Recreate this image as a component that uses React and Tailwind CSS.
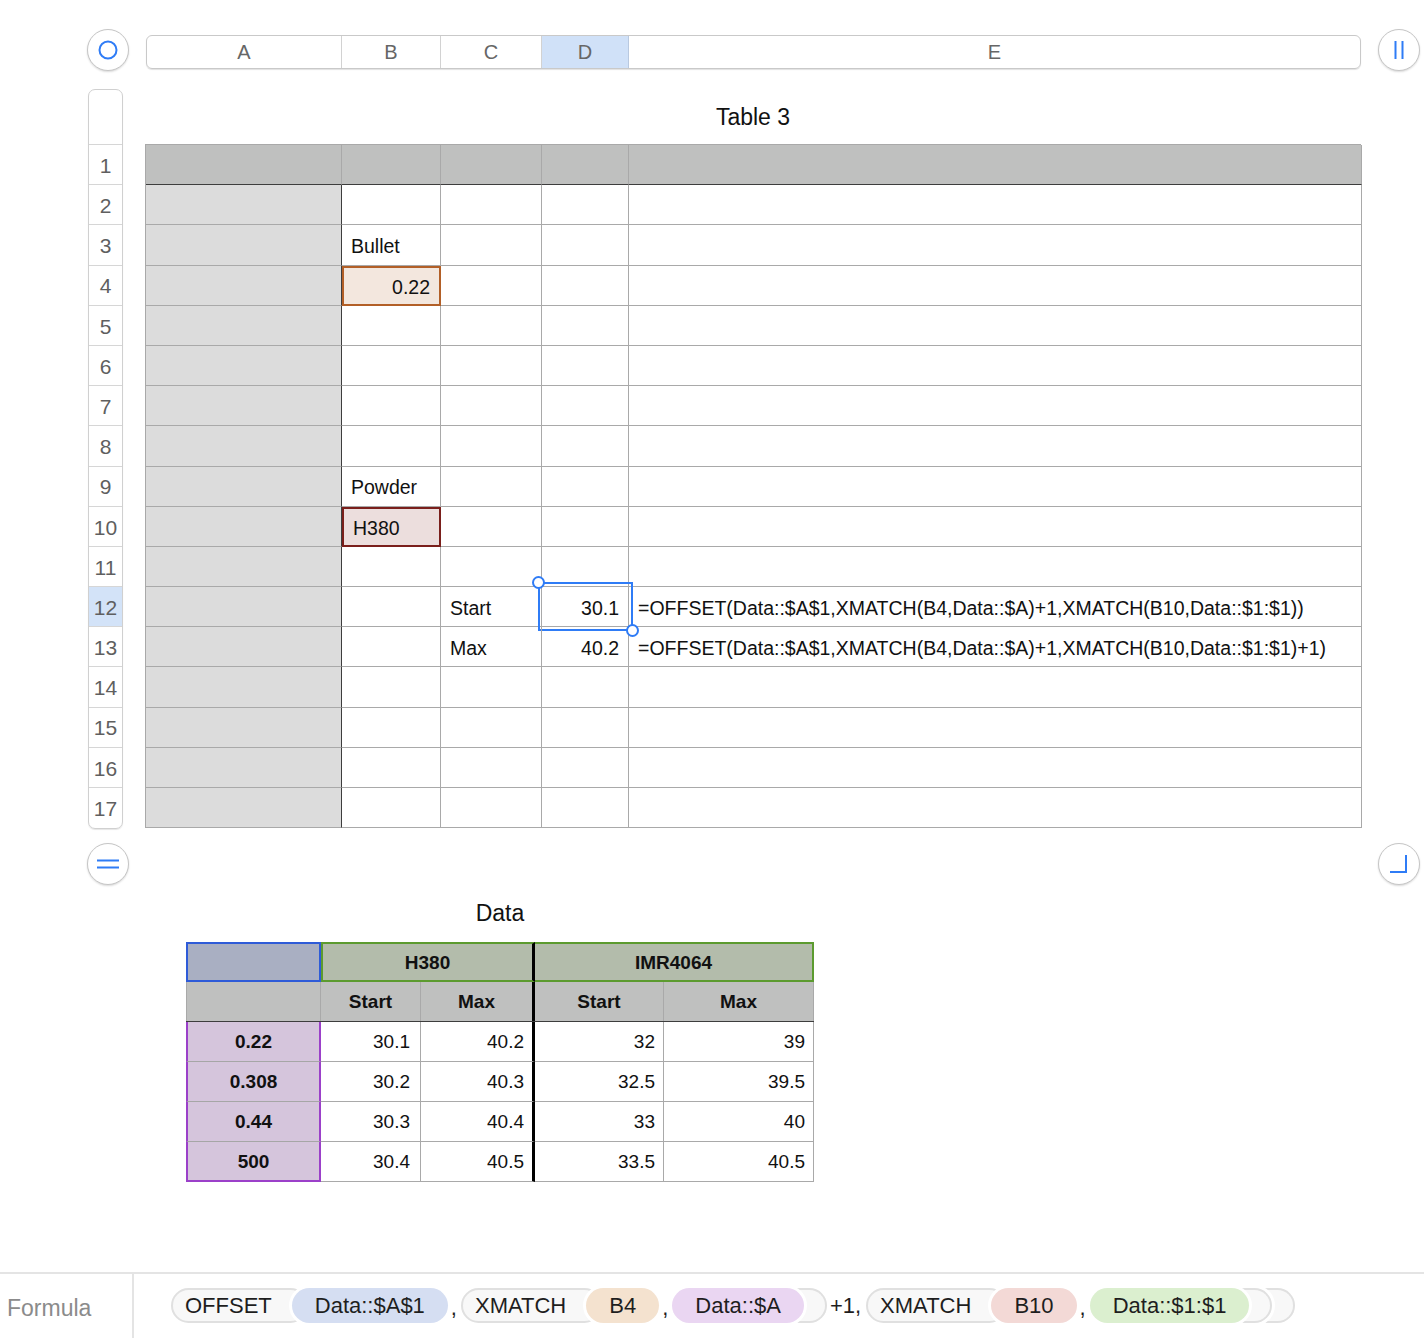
const COLS = ["A", "B", "C", "D", "E"];
const ROWS = Array.from({ length: 17 }, (_, i) => i + 1);
const FORMULA_1 = "=OFFSET(Data::$A$1,XMATCH(B4,Data::$A)+1,XMATCH(B10,Data::$1:$1))";
const FORMULA_2 = "=OFFSET(Data::$A$1,XMATCH(B4,Data::$A)+1,XMATCH(B10,Data::$1:$1)+1)";

const TEXT = {
  B3: "Bullet",
  B4: "0.22",
  B9: "Powder",
  B10: "H380",
  C12: "Start",
  D12: "30.1",
  E12: FORMULA_1,
  C13: "Max",
  D13: "40.2",
  E13: FORMULA_2
};

const RIGHT = ["B4", "D12", "D13"];

function RoundButton({ children }) {
  return (
    <div className="w-[42px] h-[42px] shrink-0 rounded-full border border-[#c6c6c6] bg-white shadow-[0_1px_2px_rgba(0,0,0,0.15)] flex items-center justify-center">
      {children}
    </div>
  );
}

function MainCell({ row, col }) {
  const key = col + row;
  const text = TEXT[key];
  let cls = "relative h-[40.2px] flex items-center px-[9px] pt-[3px] text-[19.5px] text-[#111] whitespace-nowrap";

  if (key === "B4") {
    cls += " bg-[#f3e7de] border-2 border-[#b25f27]";
  } else if (key === "B10") {
    cls += " bg-[#ecdedd] border-2 border-[#7a1f1b]";
  } else if (row === 1) {
    cls += " bg-[#bfc0bf] border-b border-r border-r-[#a9a9a9] border-b-[#3d3d3d]";
  } else if (col === "A") {
    cls += " bg-[#dcdcdc] border-b border-r border-b-[#a9a9a9] border-r-[#3d3d3d]";
  } else {
    cls += " border-b border-r border-[#a9a9a9]";
  }
  if (RIGHT.includes(key)) cls += " justify-end";

  return (
    <div className={cls}>
      {text}
      {key === "D12" ? (
        <>
          <div className="absolute -left-[4px] -top-[5px] w-[95px] h-[49px] border-2 border-[#2f7cf6]" />
          <div className="absolute -left-[10px] -top-[11px] w-[13px] h-[13px] rounded-full border-2 border-[#2f7cf6] bg-white" />
          <div className="absolute -right-[11px] -bottom-[11px] w-[13px] h-[13px] rounded-full border-2 border-[#2f7cf6] bg-white z-10" />
        </>
      ) : null}
    </div>
  );
}

const DATA = [
  ["0.22", "30.1", "40.2", "32", "39"],
  ["0.308", "30.2", "40.3", "32.5", "39.5"],
  ["0.44", "30.3", "40.4", "33", "40"],
  ["500", "30.4", "40.5", "33.5", "40.5"]
];

function DataTable() {
  return (
    <div className="ml-[186px] w-[628px]">
      <div className="h-[57px] flex items-center justify-center text-[23px] text-[#111]">Data</div>
      <div className="text-[19px] text-[#111]">
        <div className="flex h-[40px] font-bold">
          <div className="w-[135px] bg-[#a9afc2] border-2 border-[#2e5bd8]" />
          <div className="w-[214px] bg-[#b3bcab] border-2 border-[#5c9b2f] border-r-[3px] border-r-black flex items-center justify-center pt-[2px]">
            H380
          </div>
          <div className="w-[279px] bg-[#b3bcab] border-2 border-l-0 border-[#5c9b2f] flex items-center justify-center pt-[2px]">
            IMR4064
          </div>
        </div>
        <div className="flex h-[40px] font-bold bg-[#bfc0bf] border-b border-[#3d3d3d]">
          <div className="w-[135px] border-l border-r border-[#a9a9a9]" />
          <div className="w-[100px] border-r border-[#a9a9a9] flex items-center justify-center pt-[2px]">Start</div>
          <div className="w-[114px] border-r-[3px] border-black flex items-center justify-center pt-[2px]">Max</div>
          <div className="w-[129px] border-r border-[#a9a9a9] flex items-center justify-center pt-[2px]">Start</div>
          <div className="w-[150px] border-r border-[#a9a9a9] flex items-center justify-center pt-[2px]">Max</div>
        </div>
        {DATA.map((r, i) => {
          const last = i === DATA.length - 1;
          return (
            <div key={r[0]} className="flex h-[40px]">
              <div
                className={
                  last
                    ? "w-[135px] bg-[#d5c5dc] border-x-2 border-b-2 border-[#9b40c9] font-bold flex items-center justify-center pt-[2px]"
                    : "w-[135px] bg-[#d5c5dc] border-x-2 border-[#9b40c9] border-b border-b-[#a6a6a6] font-bold flex items-center justify-center pt-[2px]"
                }
              >
                {r[0]}
              </div>
              <div className="w-[100px] border-r border-b border-[#a9a9a9] flex items-center justify-end pr-[10px] pt-[2px]">{r[1]}</div>
              <div className="w-[114px] border-b border-[#a9a9a9] border-r-[3px] border-r-black flex items-center justify-end pr-[8px] pt-[2px]">{r[2]}</div>
              <div className="w-[129px] border-r border-b border-[#a9a9a9] flex items-center justify-end pr-[8px] pt-[2px]">{r[3]}</div>
              <div className="w-[150px] border-r border-b border-[#a9a9a9] flex items-center justify-end pr-[8px] pt-[2px]">{r[4]}</div>
            </div>
          );
        })}
      </div>
    </div>
  );
}

const ARG_BG = {
  blue: "bg-[#d5def2]",
  orange: "bg-[#f4e2cf]",
  purple: "bg-[#ead6f2]",
  pink: "bg-[#f3d9d6]",
  green: "bg-[#dbefcf]"
};

function Fn({ name }) {
  return (
    <span className="relative z-0 h-[35px] flex items-center pl-[12px] pr-[34px] rounded-full border-2 border-[#e0e0e0] bg-[#f8f8f8]">
      {name}
    </span>
  );
}

function Arg({ tone, children }) {
  return (
    <span className={"relative z-20 -ml-[16px] h-[35px] flex items-center px-[23px] rounded-full ring-[3px] ring-white " + ARG_BG[tone]}>
      {children}
    </span>
  );
}

function Close({ z }) {
  return (
    <span
      className={
        "relative -ml-[14px] w-[37px] h-[35px] rounded-r-full border-2 border-l-0 border-[#e0e0e0] bg-[#f8f8f8] ring-[3px] ring-white " +
        (z === 1 ? "z-10" : "z-0")
      }
    />
  );
}

function Comma() {
  return <span className="ml-[3px] mr-[4px] self-end mb-[12px]">,</span>;
}

function FormulaBar() {
  return (
    <div className="h-[66px] shrink-0 border-t-2 border-[#e4e4e4] flex">
      <div className="w-[134px] border-r-2 border-[#e4e4e4] flex items-center pl-[7px] pt-[4px] text-[23px] text-[#8b8b8b]">
        Formula
      </div>
      <div className="flex items-center pl-[37px] pb-[2px] text-[22px] text-[#1e1e1e] whitespace-nowrap">
        <Fn name="OFFSET" />
        <Arg tone="blue">Data::$A$1</Arg>
        <Comma />
        <Fn name="XMATCH" />
        <Arg tone="orange">B4</Arg>
        <Comma />
        <span className="ml-[16px] flex">
          <Arg tone="purple">Data::$A</Arg>
        </span>
        <Close z={1} />
        <span className="ml-[3px] mr-[5px]">+1,</span>
        <Fn name="XMATCH" />
        <Arg tone="pink">B10</Arg>
        <Comma />
        <span className="ml-[16px] flex">
          <Arg tone="green">Data::$1:$1</Arg>
        </span>
        <Close z={1} />
        <Close z={0} />
      </div>
    </div>
  );
}

export default function App() {
  return (
    <div className="w-[1424px] h-[1338px] overflow-hidden bg-white flex flex-col font-['Liberation_Sans',Arial,sans-serif]">
      {/* column header bar */}
      <div className="flex items-start pl-[87px] pt-[29px]">
        <RoundButton>
          <svg width="20" height="20" viewBox="0 0 20 20">
            <circle cx="10" cy="10" r="8.5" fill="none" stroke="#2f7cf6" strokeWidth="2" />
          </svg>
        </RoundButton>
        <div className="ml-[17px] mt-[6px] w-[1215px] h-[34px] flex rounded-[6px] border border-[#c9c9c9] shadow-[0_1px_1px_rgba(0,0,0,0.12)] overflow-hidden text-[20px] text-[#666]">
          <div className="w-[195px] border-r border-[#d2d2d2] flex items-center justify-center">A</div>
          <div className="w-[99px] border-r border-[#d2d2d2] flex items-center justify-center">B</div>
          <div className="w-[101px] border-r border-[#d2d2d2] flex items-center justify-center">C</div>
          <div className="w-[87px] border-r border-[#b9c9e0] bg-[#d0e1f8] flex items-center justify-center">D</div>
          <div className="flex-1 flex items-center justify-center">E</div>
        </div>
        <div className="ml-[17px]">
          <RoundButton>
            <svg width="12" height="20" viewBox="0 0 12 20">
              <path d="M2.5 1v18M9.5 1v18" stroke="#2f7cf6" strokeWidth="2" />
            </svg>
          </RoundButton>
        </div>
      </div>

      {/* row headers + table */}
      <div className="flex pl-[88px] mt-[18px]">
        <div className="w-[35px] rounded-[7px] border border-[#d0d0d0] shadow-[0_1px_1px_rgba(0,0,0,0.1)] overflow-hidden text-[21px] text-[#5f5f5f]">
          <div className="h-[55px] border-b border-[#d6d6d6]" />
          {ROWS.map((r) => (
            <div
              key={r}
              className={
                "h-[40.2px] flex items-center justify-center pt-[2px] border-b last:border-b-0 border-[#d6d6d6] " +
                (r === 12 ? "bg-[#d3e3f8]" : "")
              }
            >
              {r}
            </div>
          ))}
        </div>
        <div className="ml-[22px] w-[1216px]">
          <div className="h-[55px] flex items-center justify-center pt-[2px] text-[23px] text-[#111]">Table 3</div>
          <div className="grid grid-cols-[196px_99px_101px_87px_733px] border-l border-t border-[#a9a9a9]">
            {ROWS.map((r) => COLS.map((c) => <MainCell key={c + r} row={r} col={c} />))}
          </div>
        </div>
      </div>

      {/* bottom controls */}
      <div className="flex items-center pl-[87px] pr-[4px] mt-[14px]">
        <RoundButton>
          <svg width="24" height="10" viewBox="0 0 24 10">
            <path d="M1 1.5h22M1 8.5h22" stroke="#2f7cf6" strokeWidth="2" />
          </svg>
        </RoundButton>
        <div className="ml-auto">
          <RoundButton>
            <svg width="20" height="20" viewBox="0 0 20 20">
              <path d="M17 1v17H1" fill="none" stroke="#2f7cf6" strokeWidth="2" />
            </svg>
          </RoundButton>
        </div>
      </div>

      <DataTable />

      <div className="flex-1" />
      <FormulaBar />
    </div>
  );
}
